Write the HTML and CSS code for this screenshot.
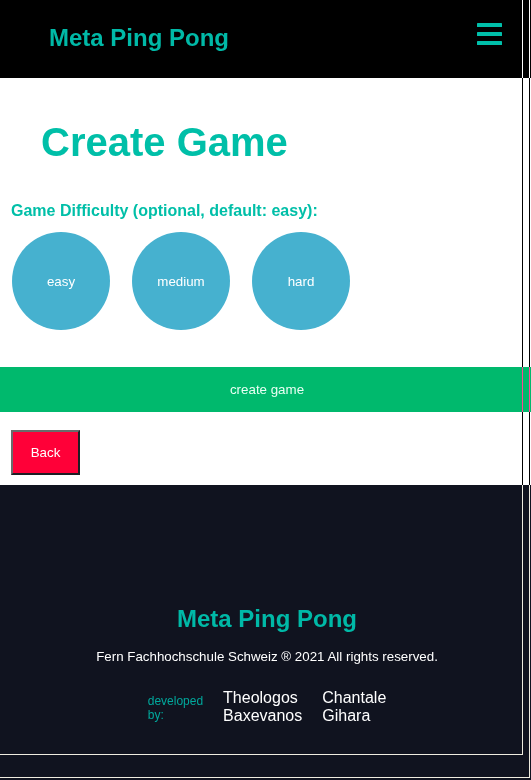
FILE: index.html
```html
<!DOCTYPE html>
<html lang="en">
<head>
<meta charset="utf-8">
<title>Create Game - Meta Ping Pong</title>
<link rel="stylesheet" href="styles.css">
</head>
<body>
<header class="topbar">
  <div class="brand">Meta Ping Pong</div>
  <svg class="burger" width="25" height="22" viewBox="0 0 25 22" aria-hidden="true">
    <rect x="0" y="0" width="25" height="4" rx="0.6"/>
    <rect x="0" y="9" width="25" height="4" rx="0.6"/>
    <rect x="0" y="18" width="25" height="4" rx="0.6"/>
  </svg>
</header>
<main class="content">
  <h1 class="page-title">Create Game</h1>
  <div class="label">Game Difficulty (optional, default: easy):</div>
  <div class="levels">
    <button class="level">easy</button>
    <button class="level">medium</button>
    <button class="level">hard</button>
  </div>
  <button class="create">create game</button>
  <button class="back">Back</button>
</main>
<footer class="footer">
  <div class="foot-brand">Meta Ping Pong</div>
  <div class="copy">Fern Fachhochschule Schweiz ® 2021 All rights reserved.</div>
  <div class="devs">
    <div class="dev-label">developed by:</div>
    <div class="dev-name">Theologos Baxevanos</div>
    <div class="dev-name">Chantale Gihara</div>
  </div>
</footer>
<div class="frame frame-a"></div>
<div class="frame frame-b"></div>
</body>
</html>
```
FILE: styles.css
```css
html, body {
  margin: 0;
  padding: 0;
}
body {
  font-family: "Liberation Sans", Arial, sans-serif;
  background: #10131f;
  min-height: 780px;
  position: relative;
  overflow: hidden;
}
.topbar {
  height: 78px;
  background: #000;
  display: flex;
  align-items: center;
  justify-content: space-between;
  padding: 0 29px 0 49px;
}
.brand {
  color: #00b9a7;
  font-weight: bold;
  font-size: 24px;
  line-height: 28px;
  margin-top: -2px;
}
.burger {
  fill: #00bfaa;
  display: block;
  margin-top: -10px;
}
.content {
  background: #fff;
  padding: 41px 0 10px 0;
}
.page-title {
  margin: 0 0 37px 41px;
  font-size: 40px;
  line-height: 46px;
  font-weight: bold;
  color: #00bfa8;
}
.label {
  margin-left: 11px;
  font-size: 16px;
  line-height: 18px;
  font-weight: bold;
  color: #00bfa8;
}
.levels {
  display: flex;
  gap: 22px;
  margin: 12px 0 0 12px;
}
.level {
  width: 98px;
  height: 98px;
  border-radius: 50%;
  border: none;
  background: #46b1cf;
  color: #fff;
  font-family: "Liberation Sans", Arial, sans-serif;
  font-size: 13.33px;
  padding: 0;
}
.create {
  display: block;
  width: 100%;
  height: 45px;
  margin-top: 37px;
  border: none;
  background: #00b96d;
  color: #eafff4;
  font-family: "Liberation Sans", Arial, sans-serif;
  font-size: 13.33px;
  padding: 0 0 0 3px;
}
.back {
  display: block;
  margin: 18px 0 0 11px;
  width: 69px;
  height: 45px;
  background: #ff0038;
  color: #fff;
  font-family: "Liberation Sans", Arial, sans-serif;
  font-size: 13.33px;
  border-style: solid;
  border-width: 2px;
  border-color: #6b6b6b #1e1e24 #1e1e24 #6b6b6b;
  padding: 0;
}
.footer {
  background: #10131f;
  padding: 120px 0 0 3px;
  text-align: center;
}
.foot-brand {
  color: #00b9a7;
  font-weight: bold;
  font-size: 24px;
  line-height: 28px;
}
.copy {
  margin-top: 16px;
  color: #fff;
  font-size: 13.33px;
  line-height: 15px;
}
.devs {
  margin-top: 25px;
  display: flex;
  justify-content: center;
  align-items: center;
  gap: 20px;
  text-align: left;
}
.dev-label {
  width: min-content;
  color: #00a89c;
  font-size: 12px;
  line-height: 14px;
  padding-top: 2px;
}
.dev-name {
  width: min-content;
  color: #fff;
  font-size: 16px;
  line-height: 18px;
}
.frame {
  position: absolute;
  top: 0;
  left: 0;
  box-sizing: border-box;
  border-right: 1px solid #fff;
  border-bottom: 1px solid #fff;
  mix-blend-mode: difference;
  pointer-events: none;
}
.frame-a {
  width: 523px;
  height: 755px;
}
.frame-b {
  width: 530px;
  height: 778px;
}
```
